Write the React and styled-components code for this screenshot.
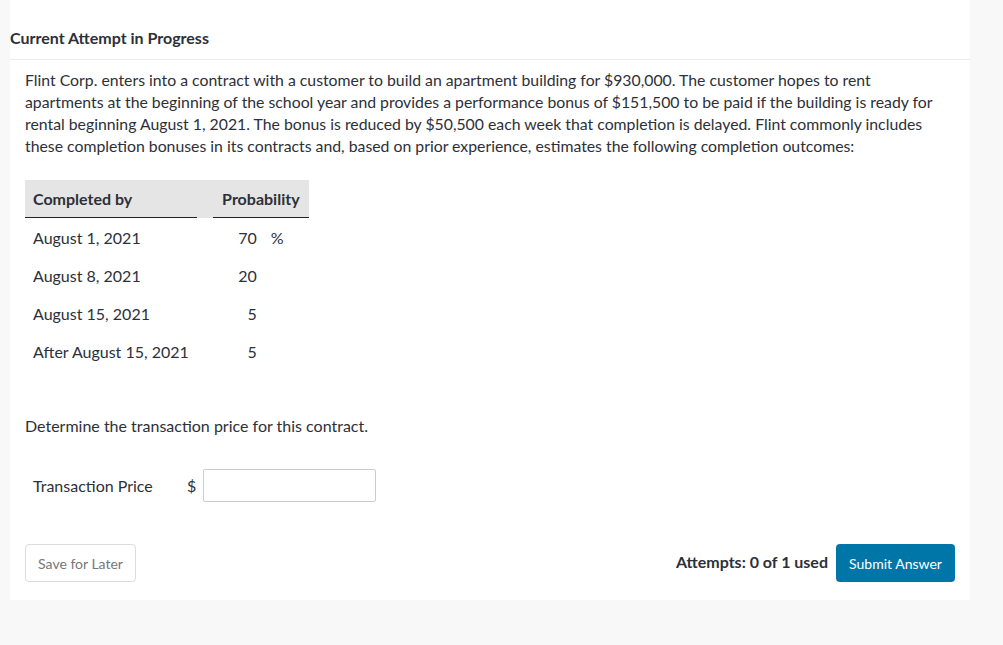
import React from "react";
import styled, { createGlobalStyle } from "styled-components";

const GlobalStyle = createGlobalStyle`
  body {
    margin: 0;
    background: #f8f8f8;
    font-family: Lato, "Open Sans", sans-serif;
    color: #2d3038;
  }
`;

const rows = [
  { date: "August 1, 2021", value: "70", unit: "%" },
  { date: "August 8, 2021", value: "20" },
  { date: "August 15, 2021", value: "5" },
  { date: "After August 15, 2021", value: "5" },
];

const App = () => {
  return (
    <>
      <GlobalStyle />
      <Card>
        <Header>Current Attempt in Progress</Header>
        <Body>
          <Paragraph>
            Flint Corp. enters into a contract with a customer to build an apartment building for $930,000. The customer hopes to rent
            <br />
            apartments at the beginning of the school year and provides a performance bonus of $151,500 to be paid if the building is ready for
            <br />
            rental beginning August 1, 2021. The bonus is reduced by $50,500 each week that completion is delayed. Flint commonly includes
            <br />
            these completion bonuses in its contracts and, based on prior experience, estimates the following completion outcomes:
          </Paragraph>
          <Table>
            <thead>
              <tr>
                <HeadCell>Completed by</HeadCell>
                <GapCell />
                <HeadCell $center>Probability</HeadCell>
              </tr>
            </thead>
            <tbody>
              {rows.map((r) => (
                <tr key={r.date}>
                  <Cell>{r.date}</Cell>
                  <Cell />
                  <Cell>
                    <Value>{r.value}</Value>
                    {r.unit && <Unit>{r.unit}</Unit>}
                  </Cell>
                </tr>
              ))}
            </tbody>
          </Table>
          <Question>Determine the transaction price for this contract.</Question>
          <AnswerRow>
            <AnswerLabel>Transaction Price</AnswerLabel>
            <Dollar>$</Dollar>
            <AnswerInput type="text" />
          </AnswerRow>
          <Footer>
            <SaveButton>Save for Later</SaveButton>
            <FooterRight>
              <Attempts>Attempts: 0 of 1 used</Attempts>
              <SubmitButton>Submit Answer</SubmitButton>
            </FooterRight>
          </Footer>
        </Body>
      </Card>
    </>
  );
};

const Card = styled.div`
  margin-left: 10px;
  width: 960px;
  height: 600px;
  background: #fff;
  box-sizing: border-box;
`;

const Header = styled.div`
  height: 60px;
  box-sizing: border-box;
  padding-top: 28px;
  font-size: 16px;
  font-weight: 700;
  line-height: 20px;
  border-bottom: 1px solid #ececec;
`;

const Body = styled.div`
  padding: 0 15px;
`;

const Paragraph = styled.p`
  margin: 9px 0 0;
  font-size: 15.8px;
  line-height: 22px;
  white-space: nowrap;
`;

const Table = styled.table`
  margin-top: 23px;
  border-collapse: collapse;
  font-size: 16px;
`;

const HeadCell = styled.th`
  height: 37px;
  padding: 0 8px;
  background: #e5e5e5;
  border-bottom: 1.5px solid #222;
  font-weight: 700;
  text-align: ${(p) => (p.$center ? "center" : "left")};
  width: ${(p) => (p.$center ? "80px" : "154px")};
`;

const GapCell = styled.th`
  width: 16px;
  padding: 0;
  background: #e5e5e5;
`;

const Cell = styled.td`
  height: 38px;
  padding: 0 8px;
  white-space: nowrap;
`;

const Value = styled.span`
  display: inline-block;
  width: 36px;
  text-align: right;
`;

const Unit = styled.span`
  margin-left: 14px;
`;

const Question = styled.p`
  margin: 45px 0 0;
  font-size: 16px;
  line-height: 22px;
`;

const AnswerRow = styled.div`
  display: flex;
  align-items: center;
  margin-top: 32px;
  padding-left: 8px;
  font-size: 16px;
`;

const AnswerLabel = styled.span`
  width: 154px;
`;

const Dollar = styled.span`
  width: 16px;
`;

const AnswerInput = styled.input`
  width: 173px;
  height: 33px;
  box-sizing: border-box;
  border: 1px solid #cccccc;
  border-radius: 2px;
  outline: none;
`;

const Footer = styled.div`
  display: flex;
  justify-content: space-between;
  align-items: center;
  margin-top: 42px;
`;

const SaveButton = styled.button`
  width: 111px;
  height: 38px;
  background: #fff;
  border: 1px solid #dcdcdc;
  border-radius: 4px;
  font-family: Lato, sans-serif;
  font-size: 14px;
  color: #777;
`;

const FooterRight = styled.div`
  display: flex;
  align-items: center;
  gap: 8px;
`;

const Attempts = styled.span`
  font-size: 16px;
  font-weight: 700;
  margin-top: -3px;
`;

const SubmitButton = styled.button`
  width: 119px;
  height: 38px;
  background: #0076a8;
  border: none;
  border-radius: 4px;
  font-family: Lato, sans-serif;
  font-size: 14px;
  color: #fff;
`;

export default App;
